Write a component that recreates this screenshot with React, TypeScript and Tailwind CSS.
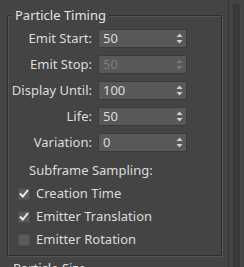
import React from "react";

const Spin = ({ disabled }: { disabled?: boolean }) => (
  <svg width="7" height="11" viewBox="0 0 7 11" className="shrink-0">
    <path d="M3.5 0.5 L6.5 4 L0.5 4 Z" fill={disabled ? "#7a7a7a" : "#d0d0d0"} />
    <path d="M0.5 7 L6.5 7 L3.5 10.5 Z" fill={disabled ? "#7a7a7a" : "#d0d0d0"} />
  </svg>
);

const Row = ({ label, value, disabled }: { label: string; value: string; disabled?: boolean }) => (
  <div className="flex items-center h-[19px]">
    <div className="w-[84px] text-right text-[#dcdcdc] leading-[19px]">{label}</div>
    <div className="ml-[6px] w-[89px] h-[19px] flex items-center justify-between bg-[#585858] border border-[#3a3a3a] pl-[4px] pr-[3px]">
      <span className={disabled ? "text-[#7c7c7c]" : "text-[#dcdcdc]"}>{value}</span>
      <Spin disabled={disabled} />
    </div>
  </div>
);

const Check = ({ label, checked }: { label: string; checked?: boolean }) => (
  <div className="flex items-center h-[19px] pl-[10px]">
    <div className="w-[12px] h-[12px] bg-[#5a5a5a] border border-[#4c4c4c] flex items-center justify-center">
      {checked && (
        <svg width="10" height="9" viewBox="0 0 10 9">
          <path d="M1 4.5 L3.8 7.5 L9 1" stroke="#ececec" strokeWidth="2" fill="none" />
        </svg>
      )}
    </div>
    <span className="ml-[6px] text-[#dcdcdc]">{label}</span>
  </div>
);

export default function App() {
  return (
    <div className="w-[244px] h-[267px] bg-[#444444] flex overflow-hidden text-[13px] font-['Noto_Sans',sans-serif]">
      <div className="w-[228px] shrink-0 pl-[7px] pt-[15px] pr-[6px]">
        <div className="relative border border-[#2f2f2f] shadow-[inset_1px_1px_0_#555555,1px_1px_0_#555555] h-[241px]">
          <div className="absolute left-[4px] top-[-10px] px-[3px] bg-[#444444] text-[#e2e2e2] leading-[19px]">Particle Timing</div>
          <div className="pt-[13px] flex flex-col gap-[7px]">
            <Row label="Emit Start:" value="50" />
            <Row label="Emit Stop:" value="50" disabled />
            <Row label="Display Until:" value="100" />
            <Row label="Life:" value="50" />
            <Row label="Variation:" value="0" />
          </div>
          <div className="mt-[9px] pl-[21px] text-[#dcdcdc] leading-[19px]">Subframe Sampling:</div>
          <div className="mt-[4px] flex flex-col gap-[4px]">
            <Check label="Creation Time" checked />
            <Check label="Emitter Translation" checked />
            <Check label="Emitter Rotation" />
          </div>
        </div>
        <div className="relative mt-[12px] border-t border-[#2f2f2f]">
          <div className="absolute left-[4px] top-[-10px] px-[2px] bg-[#444444] text-[#e2e2e2] leading-[19px]">Particle Size</div>
        </div>
      </div>
      <div className="w-[16px] shrink-0 border-l border-[#363636] bg-[#444444] flex pl-[4px] pt-[4px]">
        <div className="w-[8px] h-full bg-[#393939] border-l border-[#333333] border-r border-r-[#4a4a4a]" />
      </div>
    </div>
  );
}
